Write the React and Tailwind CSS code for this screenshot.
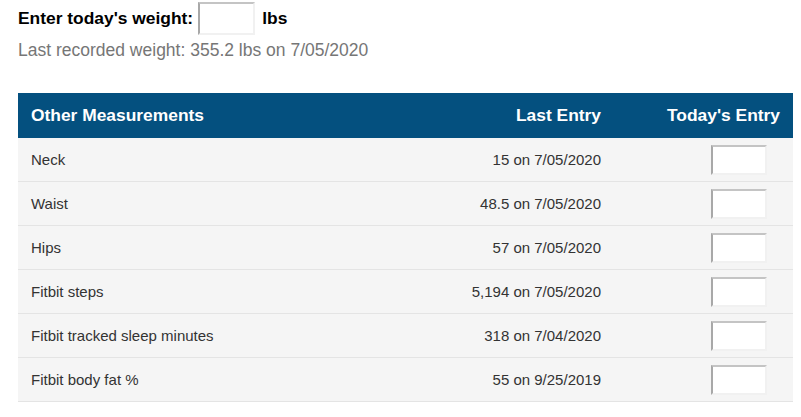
import React from "react";

const rows = [
  { name: "Neck", last: "15 on 7/05/2020" },
  { name: "Waist", last: "48.5 on 7/05/2020" },
  { name: "Hips", last: "57 on 7/05/2020" },
  { name: "Fitbit steps", last: "5,194 on 7/05/2020" },
  { name: "Fitbit tracked sleep minutes", last: "318 on 7/04/2020" },
  { name: "Fitbit body fat %", last: "55 on 9/25/2019" },
];

function Box({ className = "" }) {
  return (
    <input
      type="text"
      className={`bg-white border-2 border-t-[#c4c4c4] border-l-[#a8a8a8] border-r-[#f1f1f1] border-b-[#f1f1f1] outline-none ${className}`}
    />
  );
}

export default function App() {
  return (
    <div className="w-[801px] h-[417px] bg-white pl-[18px] pt-[2px] text-[#333] font-['Liberation_Sans',Arial,sans-serif] overflow-hidden">
      {/* weight entry */}
      <div className="flex items-center h-[33px] text-[17.4px] font-bold text-black">
        <span>Enter today's weight:</span>
        <Box className="w-[57px] h-[33px] ml-[5px] mr-[7px]" />
        <span>lbs</span>
      </div>
      <p className="mt-[5px] text-[17.5px] leading-[20px] text-[#767676]">
        Last recorded weight: 355.2 lbs on 7/05/2020
      </p>

      {/* measurements table */}
      <div className="mt-[33px] w-[775px]">
        <div className="flex items-center h-[45px] bg-[#04507f] text-white font-bold text-[17.4px]">
          <div className="flex-1 pl-[13px]">Other Measurements</div>
          <div className="w-[200px] text-right pr-[12px]">Last Entry</div>
          <div className="w-[180px] text-right pr-[13px]">Today's Entry</div>
        </div>
        {rows.map((r) => (
          <div
            key={r.name}
            className="flex items-center h-[44px] pt-[1px] bg-[#f5f5f5] border-b border-[#e4e4e4] text-[15px]"
          >
            <div className="flex-1 pl-[13px]">{r.name}</div>
            <div className="w-[200px] text-right pr-[12px]">{r.last}</div>
            <div className="w-[180px] flex justify-end pr-[26px]">
              <Box className="w-[56px] h-[30px]" />
            </div>
          </div>
        ))}
      </div>
    </div>
  );
}
